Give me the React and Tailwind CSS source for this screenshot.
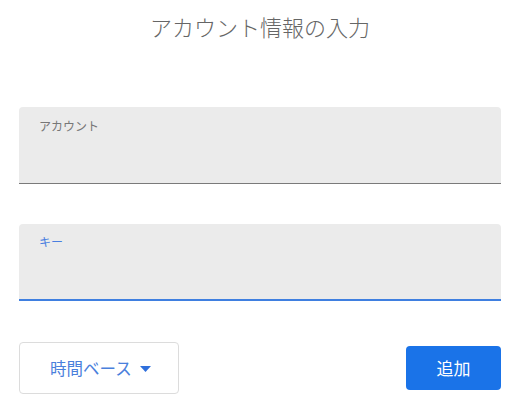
export default function App() {
  const font = { fontFamily: '"Noto Sans CJK JP", "Noto Sans", sans-serif' };
  return (
    <div className="w-[518px] h-[410px] bg-white pl-[19px] pr-[17px] pt-[10px]" style={font}>
      <h1 className="h-[32px] text-center text-[22px] leading-[32px] text-[#666666] font-light">
        アカウント情報の入力
      </h1>
      <div className="mt-[65px] h-[77px] rounded-t-[4px] bg-[#ebebeb] border-b border-[#7a7a7a] px-[20px] pt-[10px]">
        <div className="text-[12px] leading-[18px] text-[#777777]">アカウント</div>
      </div>
      <div className="mt-[40px] h-[77px] rounded-t-[4px] bg-[#ebebeb] border-b-2 border-[#3f7fe0] px-[20px] pt-[9px]">
        <div className="text-[12px] leading-[18px] text-[#4a7fe0]">キー</div>
      </div>
      <div className="mt-[41px] flex items-center justify-between">
        <button className="w-[160px] h-[52px] rounded-[4px] border border-[#dcdcdc] bg-white flex items-center pl-[30px] text-[16.5px] text-[#4a80dc]">
          <span>時間ベース</span>
          <svg width="11" height="6" viewBox="0 0 11 6" className="ml-[8px] mt-[2px]">
            <path d="M0 0 L11 0 L5.5 6 Z" fill="#2f6fdc" />
          </svg>
        </button>
        <button className="w-[95px] h-[44px] rounded-[4px] bg-[#1a73e8] text-white text-[17px] flex items-center justify-center">
          追加
        </button>
      </div>
    </div>
  );
}
